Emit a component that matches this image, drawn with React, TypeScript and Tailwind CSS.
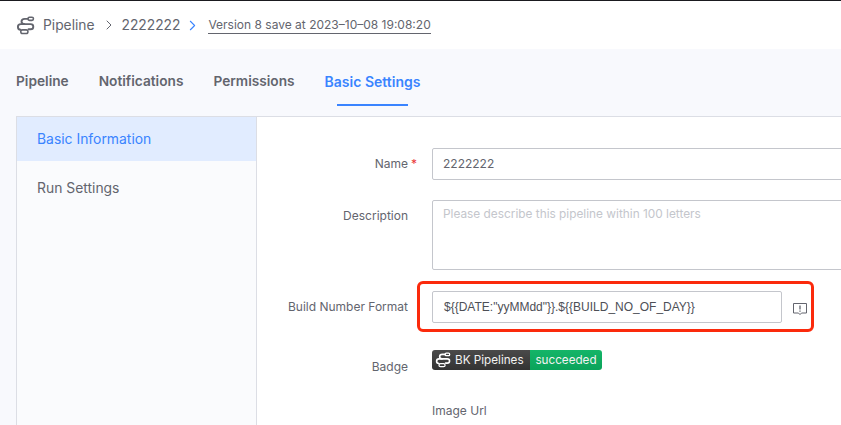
import { ChevronRight } from 'lucide-react';

function PipelineLogo({ className }: { className?: string }) {
  return (
    <svg viewBox="0 0 20 20" fill="none" stroke="currentColor" strokeWidth="2" strokeLinecap="round" className={className}>
      <path d="M12.5 3H9.2C7.3 3 5.8 4.2 5.8 5.8s1.5 2.8 3.4 2.8h6.2c1.6 0 2.8 1.1 2.8 2.6s-1.2 2.7-2.8 2.7h-2.2" />
      <path d="M8.8 8.6H5c-1.7 0-3 1.3-3 2.9 0 1.7 1.1 2.8 2.8 2.9" />
      <rect x="12.6" y="1.4" width="5.8" height="3.2" rx="1.6" strokeWidth="1.6" />
      <rect x="5" y="14.6" width="7.6" height="3.8" rx="1.9" strokeWidth="1.6" />
    </svg>
  );
}

function FormRow({ label, required, labelClass, children, className }: { label: string; required?: boolean; labelClass?: string; children: React.ReactNode; className?: string }) {
  return (
    <div className={`flex ${className ?? ''}`}>
      <div className={`w-[175px] shrink-0 pr-[24px] flex justify-end text-[12px] leading-[32px] text-[#63656e] ${labelClass ?? ''}`}>
        <span>{label}</span>
        {required && <span className="text-[#ea3636] ml-[3px] -mr-[9px]">*</span>}
      </div>
      <div className="flex-1 min-w-0">{children}</div>
    </div>
  );
}

export default function App() {
  return (
    <div className="w-[841px] h-[425px] overflow-hidden flex flex-col bg-[#f8f9fd] font-['Inter','Noto_Sans',sans-serif] text-[#63656e]">
      <div className="h-[1px] bg-[#1a1a1f]" />
      <header className="h-[48px] shrink-0 bg-white flex items-center pl-[16px] text-[14px]">
        <PipelineLogo className="w-[19px] h-[19px] text-[#63656e]" />
        <span className="ml-[8px] text-[13.8px]">Pipeline</span>
        <ChevronRight className="w-[16px] h-[16px] ml-[6px] text-[#63656e]" strokeWidth={1.5} />
        <span className="ml-[5px] text-[13.8px]">2222222</span>
        <ChevronRight className="w-[17px] h-[17px] ml-[4px] text-[#3a84ff]" strokeWidth={1.5} />
        <span className="ml-[7px] text-[12px] leading-[17px] border-b border-[#63656e]">Version 8 save at 2023–10–08 19:08:20</span>
      </header>

      <nav className="h-[67px] shrink-0 flex items-stretch pl-[16px] gap-[30px] text-[13.7px] font-semibold">
        <div className="pt-[22px]">Pipeline</div>
        <div className="pt-[22px]">Notifications</div>
        <div className="pt-[22px]">Permissions</div>
        <div className="relative pt-[22px] text-[14px] text-[#3a84ff]">
          Basic Settings
          <div className="absolute left-[12px] right-[12px] top-[55px] h-[2px] bg-[#3a84ff]" />
        </div>
      </nav>

      <main className="flex-1 min-h-0 ml-[16px] flex border-t border-l border-[#dcdee5] bg-white">
        <aside className="w-[240px] shrink-0 bg-[#fafbfd] border-r border-[#dcdee5] text-[13.9px]">
          <div className="h-[44px] flex items-center pl-[20px] pt-[1px] bg-[#e1ecff] text-[#3a84ff]">Basic Information</div>
          <div className="h-[54px] flex items-center pl-[20px] pt-[1px]">Run Settings</div>
        </aside>
        <section className="flex-1 min-w-0 pt-[31px] overflow-hidden">
          <FormRow label="Name" required>
            <div className="h-[32px] w-[430px] border border-[#c4c6cc] rounded-[2px] flex items-center pl-[10px] text-[12px]">2222222</div>
          </FormRow>
          <FormRow label="Description" className="mt-[20px]">
            <div className="h-[70px] w-[430px] border border-[#c4c6cc] rounded-[2px] pl-[10px] pt-[5px] text-[11.85px] text-[#c4c6cc]">
              Please describe this pipeline within 100 letters
            </div>
          </FormRow>
          <FormRow label="Build Number Format" className="mt-[21px]">
            <div className="relative flex items-center">
              <div className="h-[32px] w-[350px] border border-[#c4c6cc] rounded-[2px] flex items-center pl-[11px] text-[12px] font-['Liberation_Sans',sans-serif] text-[#4d4f56]">
                {'${{DATE:"yyMMdd"}}.${{BUILD_NO_OF_DAY}}'}
              </div>
              <svg viewBox="0 0 14 14" fill="none" stroke="#63656e" className="w-[14px] h-[14px] ml-[11px] mt-[3px]">
                <path d="M.5 1.5h13v9.5H8.5L7 12.6 5.5 11H.5z" />
                <path d="M7 3.5v4M7 8.6v1.2" strokeWidth="1.3" />
              </svg>
              <div className="absolute -left-[15px] -top-[10px] w-[397px] h-[51px] border-[3px] border-[#fb2a0c] rounded-[6px]" />
            </div>
          </FormRow>
          <FormRow label="Badge" labelClass="pt-[7px]" className="mt-[21px]">
            <div className="flex h-[20px] w-[170px] rounded-[3px] overflow-hidden text-[11.7px] leading-[20px] text-[#f2f2f2] mt-[6px]">
              <div className="w-[98px] bg-gradient-to-b from-[#4a4a4a] to-[#333333] flex items-center pl-[3px]">
                <PipelineLogo className="w-[16px] h-[16px] text-white shrink-0" />
                <span className="ml-[4px]">BK Pipelines</span>
              </div>
              <div className="flex-1 bg-gradient-to-b from-[#14b568] to-[#0aa35a] flex items-center justify-center">succeeded</div>
            </div>
          </FormRow>
          <FormRow label="" className="mt-[19px]">
            <div className="text-[12px] leading-[18px]">Image Url</div>
          </FormRow>
        </section>
      </main>
    </div>
  );
}
